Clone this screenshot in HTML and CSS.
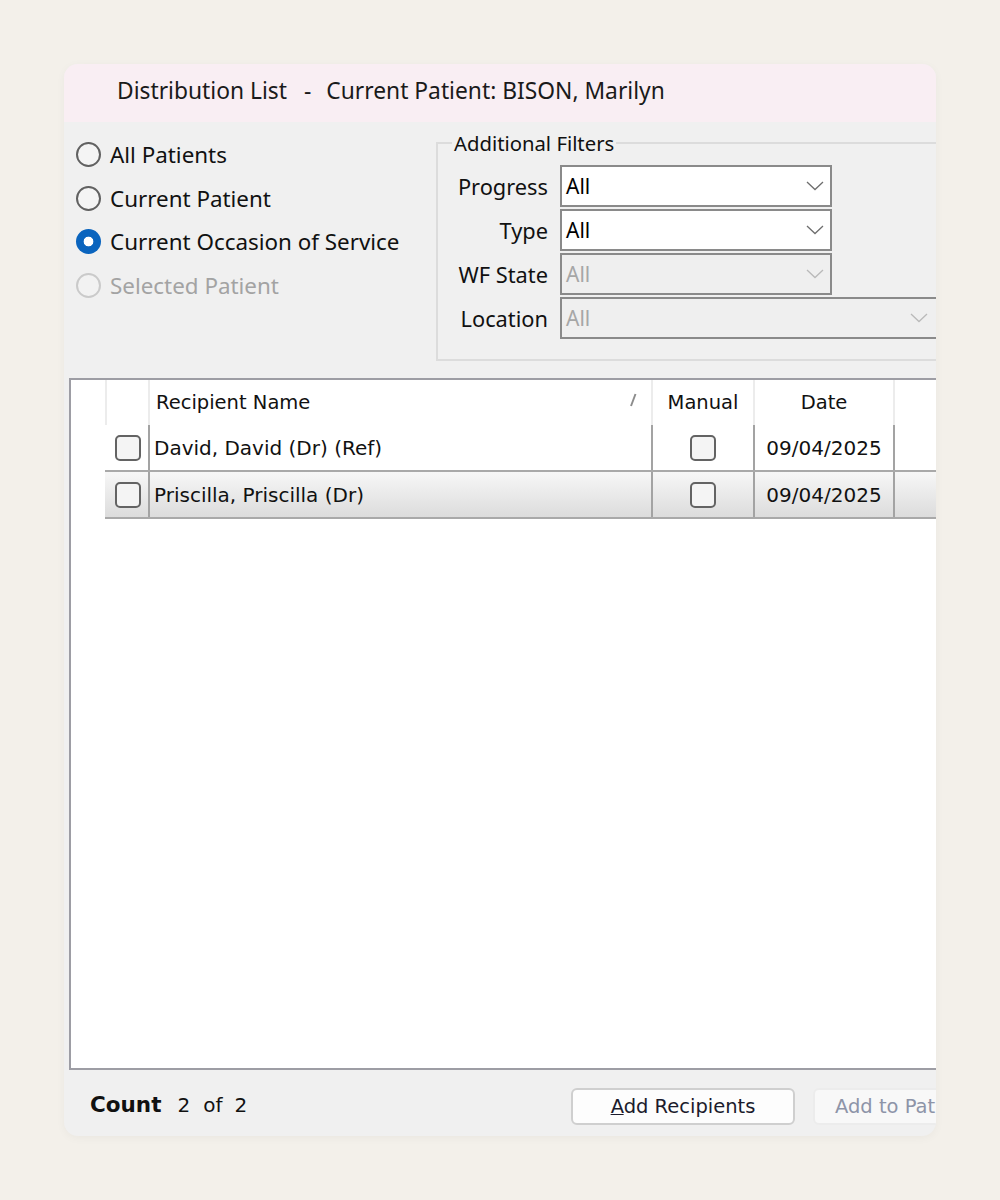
FILE: index.html
```html
<!DOCTYPE html>
<html lang="en">
<head>
<meta charset="utf-8">
<title>Distribution List</title>
<link rel="stylesheet" href="styles.css">
</head>
<body>
<div class="stage">
  <div class="window">
    <div class="titlebar"><span>Distribution List</span><span class="sep">-</span><span>Current Patient: BISON, Marilyn</span></div>

    <div class="top">
      <div class="radios">
        <div class="radio"><span class="ring"></span><span class="rlabel">All Patients</span></div>
        <div class="radio"><span class="ring"></span><span class="rlabel">Current Patient</span></div>
        <div class="radio checked"><span class="ring"></span><span class="rlabel">Current Occasion of Service</span></div>
        <div class="radio disabled"><span class="ring"></span><span class="rlabel">Selected Patient</span></div>
      </div>

      <fieldset class="filters">
        <legend>Additional Filters</legend>
        <div class="frow">
          <span class="flabel">Progress</span>
          <div class="combo"><span>All</span><svg class="chev" viewBox="0 0 18 10" width="18" height="10"><polyline points="1,1 9,8.5 17,1"/></svg></div>
        </div>
        <div class="frow">
          <span class="flabel">Type</span>
          <div class="combo"><span>All</span><svg class="chev" viewBox="0 0 18 10" width="18" height="10"><polyline points="1,1 9,8.5 17,1"/></svg></div>
        </div>
        <div class="frow">
          <span class="flabel">WF State</span>
          <div class="combo off"><span>All</span><svg class="chev" viewBox="0 0 18 10" width="18" height="10"><polyline points="1,1 9,8.5 17,1"/></svg></div>
        </div>
        <div class="frow">
          <span class="flabel">Location</span>
          <div class="combo off wide"><span>All</span><svg class="chev" viewBox="0 0 18 10" width="18" height="10"><polyline points="1,1 9,8.5 17,1"/></svg></div>
        </div>
      </fieldset>
    </div>

    <div class="gridbox">
      <div class="grid">
        <div class="row hdr">
          <div class="c c-chk"></div>
          <div class="c c-name"><span>Recipient Name</span><svg class="sort" viewBox="0 0 8 14" width="8" height="14"><line x1="6.5" y1="1" x2="2" y2="13"/></svg></div>
          <div class="c c-man">Manual</div>
          <div class="c c-date">Date</div>
          <div class="c c-rest"></div>
        </div>
        <div class="row">
          <div class="c c-chk"><span class="box"></span></div>
          <div class="c c-name">David, David (Dr) (Ref)</div>
          <div class="c c-man"><span class="box"></span></div>
          <div class="c c-date">09/04/2025</div>
          <div class="c c-rest"></div>
        </div>
        <div class="row sel">
          <div class="c c-chk"><span class="box"></span></div>
          <div class="c c-name">Priscilla, Priscilla (Dr)</div>
          <div class="c c-man"><span class="box"></span></div>
          <div class="c c-date">09/04/2025</div>
          <div class="c c-rest"></div>
        </div>
      </div>
    </div>

    <div class="footer">
      <div class="count"><b>Count</b><span class="num">2</span><span class="of">of</span><span class="num">2</span></div>
      <button class="btn"><u>A</u>dd Recipients</button>
      <button class="btn dis">Add to Pat</button>
    </div>
  </div>
</div>
</body>
</html>
```

FILE: styles.css
```css
* { box-sizing: border-box; }

html, body {
  margin: 0;
  padding: 0;
  background: #f3f0ea;
}

body {
  width: 1000px;
  height: 1200px;
  font-family: "Noto Sans", "DejaVu Sans", sans-serif;
  color: #111;
}

.stage {
  padding: 64px 0 0 64px;
}

.window {
  width: 872px;
  height: 1072px;
  border-radius: 14px;
  overflow: hidden;
  background: #f0f0f0;
  box-shadow: 0 2px 10px rgba(0, 0, 0, 0.04);
  display: flex;
  flex-direction: column;
}

/* ---------- title bar ---------- */
.titlebar {
  height: 58px;
  flex: none;
  background: #f9eef3;
  padding-left: 53px;
  font-size: 22.8px;
  line-height: 54px;
  color: #1a1a1a;
  white-space: nowrap;
  display: flex;
}

.titlebar .sep {
  padding: 0 15px 0 17px;
}

/* ---------- top area ---------- */
.top {
  height: 256px;
  flex: none;
  display: flex;
  align-items: flex-start;
}

.radios {
  width: 372px;
  flex: none;
  padding: 11px 0 0 12px;
  display: flex;
  flex-direction: column;
}

.radio {
  height: 43.5px;
  display: flex;
  align-items: center;
  gap: 9px;
  font-size: 22.4px;
  color: #111;
  white-space: nowrap;
}

.ring {
  width: 25px;
  height: 25px;
  flex: none;
  border-radius: 50%;
  border: 2px solid #616161;
  background: #f4f4f4;
}

.radio.checked .ring {
  border: none;
  background: radial-gradient(circle, #ffffff 0 4.5px, #0a64be 5.2px);
}

.radio.disabled .ring {
  border-color: #cacaca;
  background: #f2f2f2;
}

.radio.disabled .rlabel {
  color: #a3a3a3;
}

.filters {
  flex: none;
  width: 560px;
  margin: 8px 0 0 0;
  padding: 9px 0 20px 0;
  border: 2px solid #dcdcdc;
  border-right: none;
  min-inline-size: 0;
}

.filters legend {
  margin-left: 14px;
  padding: 0 2px;
  font-size: 20.3px;
  line-height: 26px;
  color: #111;
}

.frow {
  display: flex;
  align-items: center;
  height: 42px;
  margin-bottom: 2px;
}

.frow:last-child {
  margin-bottom: 0;
}

.flabel {
  width: 110px;
  flex: none;
  text-align: right;
  margin-right: 12px;
  font-size: 21.8px;
  white-space: nowrap;
}

.combo {
  width: 272px;
  height: 42px;
  flex: none;
  border: 2px solid #8a8a8a;
  background: #ffffff;
  display: flex;
  align-items: center;
  justify-content: space-between;
  padding: 0 6px 0 4px;
  font-size: 21px;
  color: #000;
}

.combo.off {
  background: #efefef;
  color: #a6a6a6;
}

.combo.wide {
  width: 420px;
  padding-right: 50px;
}

.chev {
  fill: none;
  stroke: #6e6e6e;
  stroke-width: 1.3;
}

.combo.off .chev {
  stroke: #b9b9b9;
}

/* ---------- grid ---------- */
.gridbox {
  height: 692px;
  flex: none;
  margin-left: 5px;
  width: 920px;
  border: 2px solid #9d9da4;
  border-right: none;
  background: #ffffff;
  padding-left: 34px;
  font-family: "DejaVu Sans", sans-serif;
  font-size: 20px;
  color: #111;
}

.grid {
  display: flex;
  flex-direction: column;
}

.row {
  display: flex;
  height: 47px;
  border-bottom: 2px solid #a9a9a9;
}

.row.hdr {
  height: 45px;
  border-bottom: none;
  font-size: 19.5px;
}

.row.sel {
  background: linear-gradient(#f7f7f7, #dcdcdc);
}

.c {
  flex: none;
  display: flex;
  align-items: center;
  white-space: nowrap;
  border-left: 2px solid #a3a3a3;
}

.hdr .c {
  border-left: 2px solid #ececec;
}

.row .c-chk {
  width: 43px;
  border-left: none;
  justify-content: center;
  padding-left: 2px;
}

.hdr .c-chk {
  border-left: 2px solid #ececec;
}

.c-name {
  width: 503px;
  padding-left: 4px;
}

.hdr .c-name {
  padding-left: 6px;
  justify-content: space-between;
  padding-right: 14px;
}

.c-man {
  width: 102px;
  justify-content: center;
}

.c-date {
  width: 140px;
  justify-content: center;
}

.c-rest {
  width: 200px;
}

.sort {
  stroke: #8c8c8c;
  stroke-width: 2;
  margin-top: -6px;
}

.box {
  width: 26px;
  height: 26px;
  border: 2px solid #636363;
  border-radius: 5px;
  background: #f4f4f4;
}

/* ---------- footer ---------- */
.footer {
  flex: 1;
  display: flex;
  align-items: center;
  padding-top: 3px;
  font-family: "DejaVu Sans", sans-serif;
  font-size: 20px;
}

.count {
  width: 507px;
  flex: none;
  padding-left: 26px;
  display: flex;
  align-items: baseline;
  color: #111;
}

.count b {
  font-size: 21.5px;
  letter-spacing: 0;
  margin-right: 16px;
}

.count .of {
  margin: 0 12px 0 13px;
}

.btn {
  flex: none;
  height: 37px;
  width: 224px;
  margin-top: 4px;
  border: 2px solid #cfcfcf;
  border-radius: 6px;
  background: #fdfdfd;
  font-family: "DejaVu Sans", sans-serif;
  font-size: 19.5px;
  color: #1b1b2c;
  padding: 0;
}

.btn.dis {
  margin-left: 18px;
  width: 200px;
  text-align: left;
  padding-left: 20px;
  border-color: #ececec;
  background: #f8f8f8;
  color: #8d94a8;
}
```
